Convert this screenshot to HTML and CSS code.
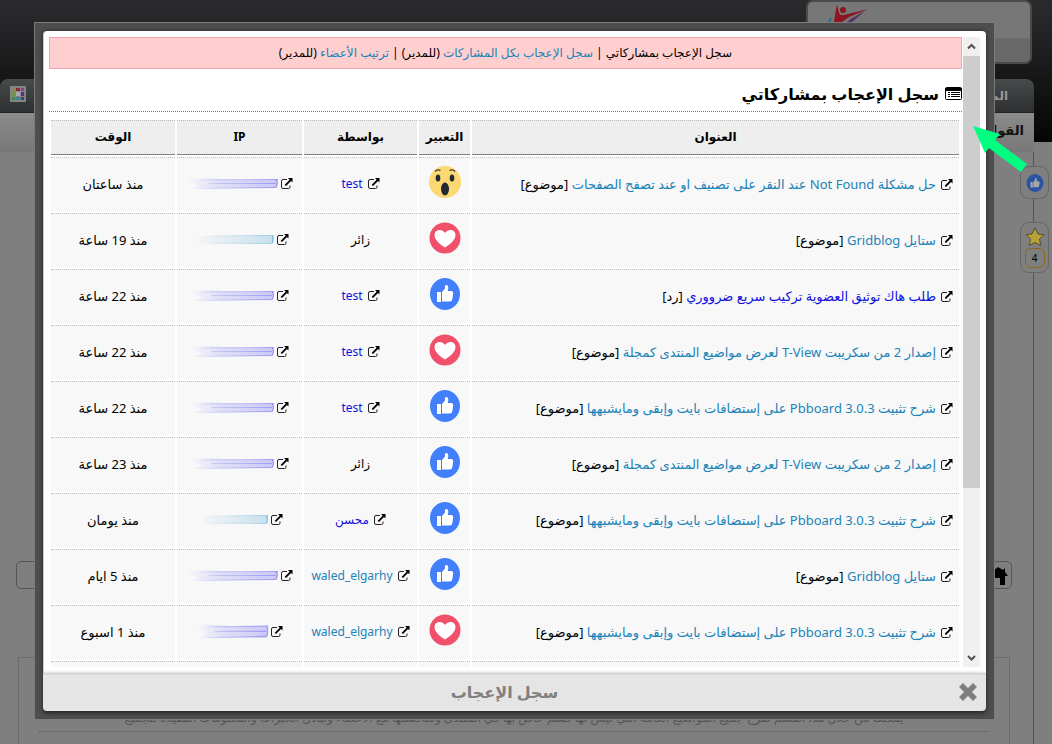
FILE: index.html
```
<!DOCTYPE html>
<html lang="ar" dir="rtl">
<head>
<meta charset="utf-8">
<title>سجل الإعجاب</title>
<link rel="stylesheet" href="styles.css">
</head>
<body>
<svg class="defs" aria-hidden="true">
  <linearGradient id="fade-violet"><stop offset="0" stop-color="#aaa8f6" stop-opacity="0"/><stop offset=".35" stop-color="#b4b2f4" stop-opacity=".7"/><stop offset="1" stop-color="#9c98f4"/></linearGradient>
  <linearGradient id="fade-blue"><stop offset="0" stop-color="#c0dcea" stop-opacity="0"/><stop offset=".4" stop-color="#c8dfea" stop-opacity=".8"/><stop offset="1" stop-color="#94c8e2"/></linearGradient>
  <symbol id="ext" viewBox="0 0 13 12"><path d="M7 1.500H3A1.500 1.500 0 0 0 1.500 3v6A1.500 1.500 0 0 0 3 10.500h5.500A1.500 1.500 0 0 0 10 9V7.500" fill="none" stroke="#222" stroke-width="1"/><path d="M8 0h4.500v4.500l-1.500-1.500-5 5-1.300-1.300 5-5z" fill="#000"/></symbol>
  <symbol id="like" viewBox="0 0 32 32"><ellipse cx="16" cy="16" rx="15" ry="16" fill="#427ffc"/><path d="M8 14h4v10H8zM13 14l3-3.500V8q0-1 1.300-1 2.200.4 2 3.500l-.5 2.500h3.700q2 .3 1.700 2.300l-.8 5.700q-.4 2.500-2.600 2.500H13z" fill="#fff"/></symbol>
  <symbol id="love" viewBox="0 0 32 32"><circle cx="16" cy="16" r="15.500" fill="#f0506a"/><path d="M16 25.500C11 22.500 5.500 18 5.500 13c0-5.500 7.500-7 10.500-2 3-5 10.500-3.500 10.500 2 0 5-5.500 9.500-10.500 12.500z" fill="#fff"/></symbol>
  <symbol id="wow" viewBox="0 0 32 32"><circle cx="16" cy="16" r="16" fill="#fbd871"/><ellipse cx="9" cy="12" rx="2.300" ry="3.500" fill="#222831"/><ellipse cx="23" cy="12" rx="2.300" ry="3.500" fill="#222831"/><ellipse cx="16" cy="23" rx="4" ry="6.500" fill="#222831"/><path d="M6 5.500Q8 3 11.500 4.500M20.500 4.500Q24 3 26 5.500" fill="none" stroke="#403a2b" stroke-width="1.300"/></symbol>
  <symbol id="smear" viewBox="0 0 92 14" preserveAspectRatio="none"><path d="M0 1Q24 1 50 3L91 3 90 11 45 11 3 12 12 8 2 6z" fill="url(#fade-violet)" opacity=".5"/><path d="M12 3L91 2.500M22 6.500L89 6.500M6 11.500L89 10.500" stroke="url(#fade-violet)" stroke-width="1"/><path d="M89 3q3 3 0 7" fill="none" stroke="#8a85ef"/></symbol>
  <symbol id="smear-blue" viewBox="0 0 92 14" preserveAspectRatio="none"><path d="M5 3L91 2.500 90 10 45 11 0 12 12 8z" fill="url(#fade-blue)" opacity=".5"/><path d="M12 3L91 2.500M22 10L89 10.500" stroke="url(#fade-blue)" stroke-width="1"/><path d="M89 3q2 3 0 7" fill="none" stroke="#5eb4dc"/></symbol>
</svg>

<div class="site">
  <header class="masthead"><div class="logo">
    <svg width="40" height="24" viewBox="0 0 40 24"><path d="M9 0l2 9q1 3 5 2l24-6-19 8-7 5-9 5z" fill="#8d1420"/><circle cx="15" cy="6" r="3" fill="#8d1420"/><path d="M38 6L24 18l-7 4h-3l9-7z" fill="#553063"/><path d="M3 14l-3 7" stroke="#22708c" stroke-width="2"/></svg>
  </div></header>
  <nav class="mainnav"><a href="#" class="tab">المنتدى</a>
    <svg width="16" height="16" viewBox="0 0 16 16"><path fill="#858585" d="M0 0h16v16H0z"/><path fill="#8b8558" d="M2 2h3v3H2z"/><path fill="#8b2a3a" d="M6 2h4v3H6z"/><path fill="#8a3f84" d="M11 2h3v3h-3z"/><path fill="#6d9441" d="M2 6h3v4H2z"/><path fill="#aaa" d="M6 6h4v4H6z"/><path fill="#5e2c83" d="M11 6h3v4h-3z"/><path fill="#408a49" d="M2 11h3v3H2z"/><path fill="#3b8297" d="M6 11h4v3H6z"/><path fill="#35448f" d="M11 11h3v3h-3z"/></svg>
  </nav>
  <nav class="subnav"><a href="#">القوانين</a></nav>
  <main class="forum">
    <div class="toolbar"><svg width="20" height="20" viewBox="0 0 20 20"><path d="M10 1l5 3 2-2v4l3 4h-3v9h-5v-7H0V9z" fill="#000"/></svg></div>
    <div class="panel"><p>يمكنك من خلال هذا القسم طرح جميع المواضيع العامة التي ليس لها قسم خاص بها في المنتدى ومناقشتها مع الأعضاء وتبادل الخبرات والمعلومات المفيدة للجميع</p></div>
  </main>
</div>
<aside class="rail">
  <div class="chip"><svg width="18" height="20"><use href="#like"/></svg></div>
  <div class="chip chip-star"><svg width="20" height="20" viewBox="0 0 20 20"><path d="M10 1l3 6 6 .7-4.500 4.300 1.300 6.500L10 15.500 4.200 18.500 5.500 12 1 7.700 7 7z" fill="#b6a239" stroke="#554f2b"/></svg><span>4</span></div>
</aside>

<div class="shade">
<section class="modal" role="dialog" aria-labelledby="modal-name">
  <div class="viewport">
    <div class="content">
      <p class="links">سجل الإعجاب بمشاركاتي | <a href="#">سجل الإعجاب بكل المشاركات</a> (للمدير) | <a href="#">ترتيب الأعضاء</a> (للمدير)</p>
      <h1><svg width="17" height="14" viewBox="0 0 17 14"><rect x=".5" y=".5" width="16" height="12" rx="1" fill="#fff" stroke="#000"/><path d="M0 1h17v3H0zM3 5h2v1H3zM3 7h2v1H3zM3 9h2v1H3zM6 5h9v1H6zM6 7h9v1H6zM6 9h9v1H6z"/></svg>سجل الإعجاب بمشاركاتي</h1>
      <table>
        <colgroup><col><col class="c-mood"><col class="c-by"><col class="c-ip"><col class="c-time"></colgroup>
        <thead><tr><th>العنوان</th><th>التعبير</th><th>بواسطة</th><th>IP</th><th>الوقت</th></tr></thead>
        <tbody>
        <tr><td><svg class="ext"><use href="#ext"/></svg><a href="#">حل مشكلة Not Found عند النقر على تصنيف او عند تصفح الصفحات</a> [موضوع]</td><td><svg class="mood"><use href="#wow"/></svg></td><td><svg class="ext"><use href="#ext"/></svg><a href="#" class="member">test</a></td><td><svg class="ext ip"><use href="#ext"/></svg><svg class="smear"><use href="#smear"/></svg></td><td>منذ ساعتان</td></tr>
        <tr><td><svg class="ext"><use href="#ext"/></svg><a href="#">ستايل Gridblog</a> [موضوع]</td><td><svg class="mood"><use href="#love"/></svg></td><td>زائر</td><td><svg class="ext ip"><use href="#ext"/></svg><svg class="smear mid"><use href="#smear-blue"/></svg></td><td>منذ 19 ساعة</td></tr>
        <tr><td><svg class="ext"><use href="#ext"/></svg><a href="#" class="member">طلب هاك توثيق العضوية تركيب سريع ضرووري</a> [رد]</td><td><svg class="mood"><use href="#like"/></svg></td><td><svg class="ext"><use href="#ext"/></svg><a href="#" class="member">test</a></td><td><svg class="ext ip"><use href="#ext"/></svg><svg class="smear mid"><use href="#smear"/></svg></td><td>منذ 22 ساعة</td></tr>
        <tr><td><svg class="ext"><use href="#ext"/></svg><a href="#">إصدار 2 من سكريبت T-View لعرض مواضيع المنتدى كمجلة</a> [موضوع]</td><td><svg class="mood"><use href="#love"/></svg></td><td><svg class="ext"><use href="#ext"/></svg><a href="#" class="member">test</a></td><td><svg class="ext ip"><use href="#ext"/></svg><svg class="smear mid"><use href="#smear"/></svg></td><td>منذ 22 ساعة</td></tr>
        <tr><td><svg class="ext"><use href="#ext"/></svg><a href="#">شرح تثبيت Pbboard 3.0.3 على إستضافات بايت وإبقى ومايشبهها</a> [موضوع]</td><td><svg class="mood"><use href="#like"/></svg></td><td><svg class="ext"><use href="#ext"/></svg><a href="#" class="member">test</a></td><td><svg class="ext ip"><use href="#ext"/></svg><svg class="smear mid"><use href="#smear"/></svg></td><td>منذ 22 ساعة</td></tr>
        <tr><td><svg class="ext"><use href="#ext"/></svg><a href="#">إصدار 2 من سكريبت T-View لعرض مواضيع المنتدى كمجلة</a> [موضوع]</td><td><svg class="mood"><use href="#like"/></svg></td><td>زائر</td><td><svg class="ext ip"><use href="#ext"/></svg><svg class="smear mid"><use href="#smear"/></svg></td><td>منذ 23 ساعة</td></tr>
        <tr><td><svg class="ext"><use href="#ext"/></svg><a href="#">شرح تثبيت Pbboard 3.0.3 على إستضافات بايت وإبقى ومايشبهها</a> [موضوع]</td><td><svg class="mood"><use href="#like"/></svg></td><td><svg class="ext"><use href="#ext"/></svg><a href="#" class="member">محسن</a></td><td><svg class="ext ip"><use href="#ext"/></svg><svg class="smear short"><use href="#smear-blue"/></svg></td><td>منذ يومان</td></tr>
        <tr><td><svg class="ext"><use href="#ext"/></svg><a href="#">ستايل Gridblog</a> [موضوع]</td><td><svg class="mood"><use href="#like"/></svg></td><td><svg class="ext"><use href="#ext"/></svg><a href="#">waled_elgarhy</a></td><td><svg class="ext ip"><use href="#ext"/></svg><svg class="smear"><use href="#smear"/></svg></td><td>منذ 5 ايام</td></tr>
        <tr><td><svg class="ext"><use href="#ext"/></svg><a href="#">شرح تثبيت Pbboard 3.0.3 على إستضافات بايت وإبقى ومايشبهها</a> [موضوع]</td><td><svg class="mood"><use href="#love"/></svg></td><td><svg class="ext"><use href="#ext"/></svg><a href="#">waled_elgarhy</a></td><td><svg class="ext ip"><use href="#ext"/></svg><svg class="smear short tall"><use href="#smear"/></svg></td><td>منذ 1 اسبوع</td></tr>
        <tr><td></td><td></td><td></td><td></td><td></td></tr>
        </tbody>
      </table>
    </div>
    <div class="scrollbar" aria-hidden="true">
      <svg width="9" height="19" viewBox="0 0 9 19"><path d="M1 11.500L4.500 8 8 11.500" fill="none" stroke="#505050" stroke-width="2"/></svg>
      <div class="track"><div class="thumb"></div></div>
      <svg width="9" height="19" viewBox="0 0 9 19"><path d="M1 8l3.500 3.500L8 8" fill="none" stroke="#505050" stroke-width="2"/></svg>
    </div>
  </div>
  <footer>
    <button type="button" aria-label="إغلاق"><svg width="20" height="20" viewBox="0 0 20 20"><path d="M3 3l14 14M17 3L3 17" stroke="#7e7e7e" stroke-width="5.500"/></svg></button>
    <h2 id="modal-name">سجل الإعجاب</h2>
  </footer>
</section>
</div>
<svg class="pointer" width="54" height="47" viewBox="0 0 54 47"><path d="M0 0l27 8-5 6 32 24-6 8-32-24-4 5z" fill="#00ff80"/></svg>
</body>
</html>
```
FILE: styles.css
```
* { box-sizing: border-box; }
body {
  margin: 0;
  height: 100vh;
  overflow: hidden;
  background: #7f7f7f;
  color: #000;
  font: 12px/20px "Noto Sans", "DejaVu Sans", sans-serif;
}
a { color: #1a83b8; text-decoration: none; }
a.member { color: #1010e0; }
.defs { position: absolute; width: 0; height: 0; }

.site {
  height: 100vh;
  display: flex;
  flex-direction: column;
  background: linear-gradient(#2b2a2d, #242326 30px, #111 100px, #050505 142px, #7f7f7f 142px);
}
.masthead { height: 79px; flex: none; padding-right: 20px; }
.logo {
  width: 226px;
  height: 64px;
  padding: 2px 20px;
  direction: ltr;
  border: 2px solid #464b4c;
  border-radius: 7px;
  background: linear-gradient(#777 36px, #696969 36px);
}
.mainnav {
  height: 34px;
  flex: none;
  margin-right: 18px;
  padding: 0 26px 0 10px;
  display: flex;
  align-items: center;
  justify-content: space-between;
  border-radius: 8px 8px 0 0;
  background: linear-gradient(#484c4d, #2d2f30);
  border-bottom: 1px solid #222;
}
.mainnav svg { margin-top: -4px; }
.tab { color: #969696; font-weight: bold; }
.subnav {
  height: 39px;
  flex: none;
  margin-right: 18px;
  padding: 7px 10px;
  background: linear-gradient(#8a8a8a, #787878);
}
.subnav a { color: #111; font-weight: bold; font-size: 13px; }
.forum {
  flex: 1;
  margin-right: 18px;
  padding: 0 21px 0 16px;
  display: flex;
  flex-direction: column;
  justify-content: flex-end;
  gap: 68px;
  border-right: 1px solid #555;
  background: #7f7f7f;
}
.toolbar { height: 28px; padding: 4px 3px; border: 1px solid #555; border-radius: 5px; }
.panel { height: 87px; margin: 0 2px; padding: 50px 20px 0; border: 1px solid #6b6b6b; border-bottom: 0; text-align: center; }
.panel p { margin: 0; height: 24px; border-bottom: 1px dotted #5c5c5c; color: #555; white-space: nowrap; }

.rail {
  position: absolute;
  top: 166px;
  right: 3px;
  width: 29px;
  display: flex;
  flex-direction: column;
  gap: 23px;
}
.chip {
  height: 33px;
  display: flex;
  flex-direction: column;
  align-items: center;
  justify-content: center;
  border: 1px solid #666;
  border-radius: 9px;
  background: #7f7f7f;
}
.chip > svg { filter: brightness(.65); }
.chip-star { height: 51px; gap: 1px; }
.chip-star > svg { filter: none; }
.chip-star span { width: 20px; line-height: 18px; font-size: 10px; text-align: center; border: 1px solid #8b671d; border-radius: 6px; }

.shade { position: fixed; inset: 0; padding: 22px 57px 24px 34px; }
.modal {
  height: 100%;
  display: flex;
  flex-direction: column;
  border: 1px solid #7b7b7b;
  padding: 8px;
  background: #4e4e4e;
}
.viewport {
  flex: 1;
  min-height: 0;
  display: flex;
  padding: 6px 6px 6px 5px;
  direction: ltr;
  background: #fff;
  border-left: 1px solid #ccc;
  border-radius: 4px 4px 0 0;
  box-shadow: 0 0 4px #222;
}
.content { flex: 1; direction: rtl; overflow: hidden; padding-right: 1px; }
.links {
  margin: 0;
  padding: 5px;
  text-align: center;
  background: #ffcfcf;
  border: 1px solid #eca8ae;
}
h1 {
  margin: 8px 0 6px;
  height: 35px;
  display: flex;
  align-items: center;
  gap: 6px;
  font-size: 16px;
  border-bottom: 1px dotted #777;
}
table { width: 100%; border-spacing: 2px; table-layout: fixed; padding-right: 1px; }
.c-mood { width: 51px; }
.c-by { width: 113px; }
.c-ip { width: 125px; }
.c-time { width: 124px; }
th { height: 35px; padding: 0 0 2px; background: #eee; border-top: 1px dotted #bbb; border-bottom: 1px solid #808080; }
td { height: 54px; padding: 0 0 2px; text-align: center; background: #f8f8f8; border-top: 1px dotted #bbb; white-space: nowrap; }
td:first-child, td:last-child { font-size: 13px; }
td:first-child { text-align: right; padding-right: 6px; }
td:nth-child(2) { padding-bottom: 5px; }
td svg { vertical-align: middle; }
.ext { width: 13px; height: 12px; margin-left: 4px; }
.ext.ip { margin-left: 1px; }
.mood { width: 32px; height: 32px; }
.smear { width: 92px; height: 14px; }
.smear.mid { width: 85px; }
.smear.short { width: 72px; }
.smear.tall { height: 18px; }

.scrollbar { width: 17px; display: flex; flex-direction: column; align-items: center; background: #f0f0f0; }
.track { flex: 1; width: 100%; }
.thumb { height: 73%; background: #cdcdcd; }

footer {
  height: 38px;
  flex: none;
  display: flex;
  align-items: center;
  padding: 0 8px 2px;
  background: #e5e5e5;
  border-top: 2px solid #d8d8d8;
  border-radius: 0 0 4px 4px;
  box-shadow: 0 2px 4px #222;
}
footer button { padding: 0; border: 0; background: none; display: flex; }
footer h2 { flex: 1; margin: 0; text-align: center; color: #808080; font-size: 16px; }
.pointer { position: absolute; top: 126px; right: 25px; }
```
